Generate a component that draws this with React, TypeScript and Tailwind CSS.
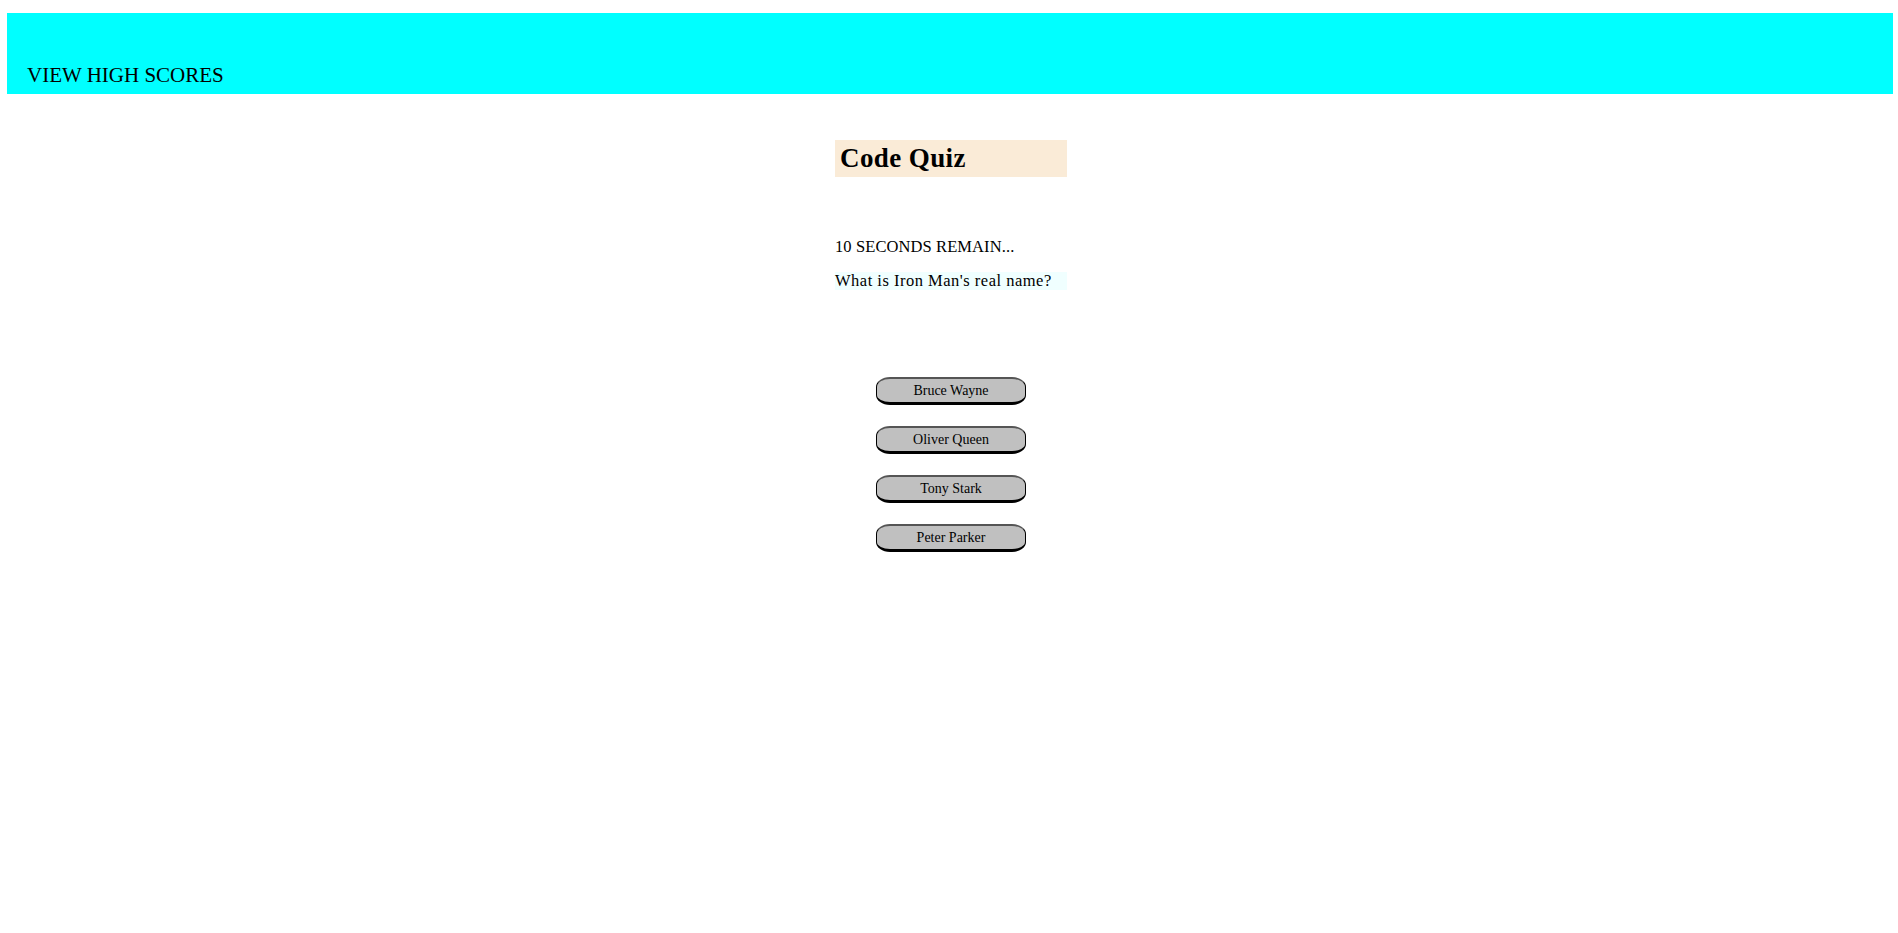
import React from "react";

const serif = { fontFamily: '"Liberation Serif", "DejaVu Serif", serif' };

export default function App() {
  const answers = ["Bruce Wayne", "Oliver Queen", "Tony Stark", "Peter Parker"];
  return (
    <div className="min-h-[933px] w-full bg-white text-black" style={serif}>
      <div className="h-[13px]" />
      <header className="ml-[7px] mr-[5px] flex h-[81px] items-end bg-[#00ffff] pb-[7px] pl-[20px]">
        <span className="text-[21px] leading-[24px]">VIEW HIGH SCORES</span>
      </header>
      <div className="flex justify-center pl-[4px]">
        <main className="flex w-[232px] flex-col">
          <h1 className="mt-[46px] flex h-[37px] items-center bg-[#faebd7] pl-[5px] text-[27px] font-bold leading-none tracking-[0.4px]">
            Code Quiz
          </h1>
          <p className="mt-[61px] text-[16.5px] leading-[18px] tracking-[0.1px]">10 SECONDS REMAIN...</p>
          <p className="mt-[16px] bg-[#f0ffff] text-[16.5px] leading-[18px] tracking-[0.5px]">What is Iron Man's real name?</p>
          <div className="mt-[87px] flex flex-col items-center gap-[21px]">
            {answers.map((a) => (
              <button
                key={a}
                className="h-[28px] w-[150px] rounded-[14px/10px] border-x border-t-2 border-b-[3px] border-x-black border-t-[#555] border-b-black bg-[#c0c0c0] text-[14px] leading-none"
                style={serif}
              >
                {a}
              </button>
            ))}
          </div>
        </main>
      </div>
    </div>
  );
}
